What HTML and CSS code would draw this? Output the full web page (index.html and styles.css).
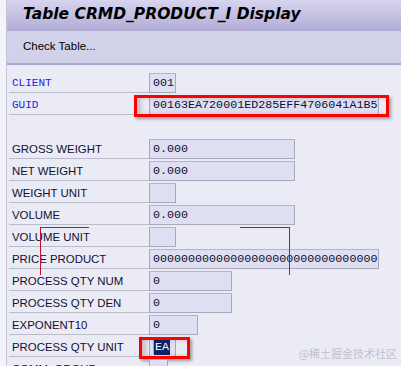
FILE: index.html
```html
<!DOCTYPE html>
<html lang="en">
<head>
    <meta charset="UTF-8">
    <meta name="viewport" content="width=device-width, initial-scale=1.0">
    <link rel="stylesheet" href="styles.css">
</head>
<body>

    <div class="window">
        <header class="title">Table CRMD_PRODUCT_I Display</header>
        <div class="toolbar">Check Table...</div>

        <section class="form">
            <div class="row key">
                <div class="label">CLIENT</div>
                <div class="field w-unit">001</div>
            </div>
            <div class="row key">
                <div class="label">GUID</div>
                <div class="field w-guid">00163EA720001ED285EFF4706041A1B5</div>
                <span class="mark mark-guid"></span>
            </div>
            <div class="row blank"></div>
            <div class="row">
                <div class="label">GROSS WEIGHT</div>
                <div class="field w-num">0.000</div>
            </div>
            <div class="row">
                <div class="label">NET WEIGHT</div>
                <div class="field w-num">0.000</div>
            </div>
            <div class="row">
                <div class="label">WEIGHT UNIT</div>
                <div class="field w-unit"></div>
            </div>
            <div class="row">
                <div class="label">VOLUME</div>
                <div class="field w-num">0.000</div>
            </div>
            <div class="row">
                <div class="label">VOLUME UNIT</div>
                <div class="field w-unit"></div>
            </div>
            <div class="row">
                <div class="label">PRICE PRODUCT</div>
                <div class="field w-guid">00000000000000000000000000000000</div>
            </div>
            <div class="row">
                <div class="label">PROCESS QTY NUM</div>
                <div class="field w-qty">0</div>
            </div>
            <div class="row">
                <div class="label">PROCESS QTY DEN</div>
                <div class="field w-qty">0</div>
            </div>
            <div class="row">
                <div class="label">EXPONENT10</div>
                <div class="field w-exp">0</div>
            </div>
            <div class="row">
                <div class="label">PROCESS QTY UNIT</div>
                <div class="field w-unit"><span class="caret"></span><span class="selected">EA</span></div>
                <span class="mark mark-unit"></span>
            </div>
            <div class="row">
                <div class="label">COMM. GROUP</div>
                <div class="field w-small"></div>
            </div>
        </section>
    </div>

    <!-- connector lines drawn over the form -->
    <div class="wire wire-left"></div>
    <div class="wire wire-right"></div>

    <div class="watermark">@稀土掘金技术社区</div>

</body>
</html>
```

FILE: styles.css
```css
body {
    margin: 0;
    padding: 0;
    height: 366px;
    overflow: hidden;
    background-color: #f3f3fa;
    font-family: 'Liberation Sans', Arial, sans-serif;
    color: #000;
}

.window {
    margin-left: 6px;
    height: 366px;
    border-left: 1px solid #c4c4d6;
    background-color: #ebebf6;
}

.title {
    height: 31px;
    box-sizing: border-box;
    padding-left: 16px;
    line-height: 29px;
    font-family: 'DejaVu Sans', Verdana, sans-serif;
    font-size: 15.5px;
    font-weight: bold;
    font-style: italic;
    background: linear-gradient(#d6d4ee, #b2aed8);
    border-bottom: 1px solid #aeaad4;
}

.toolbar {
    height: 34px;
    box-sizing: border-box;
    padding-left: 16px;
    line-height: 31px;
    font-size: 11.5px;
    background-color: #d2d1ea;
    border-bottom: 2px solid #a9a7d0;
}

.form {
    padding: 8px 0 0 2px;
}

.row {
    position: relative;
    display: flex;
    height: 22px;
}

.label {
    width: 140px;
    height: 20px;
    box-sizing: border-box;
    padding-left: 3px;
    line-height: 20px;
    font-size: 11.4px;
    color: #101030;
    border-bottom: 1px solid #bcbccc;
}

.key .label {
    font-family: 'Liberation Mono', 'Courier New', monospace;
    font-size: 11px;
    color: #2222e6;
}

.field {
    height: 20px;
    box-sizing: border-box;
    padding-left: 3px;
    line-height: 18px;
    font-family: 'Liberation Mono', 'Courier New', monospace;
    font-size: 11.7px;
    color: #10102a;
    background-color: #dfdff4;
    border: 1px solid #a8a8b6;
    border-top-color: #b4b4c2;
    white-space: nowrap;
    overflow: hidden;
}

.w-unit { width: 27px; }
.w-small { width: 19px; }
.w-guid { width: 230px; }
.w-num { width: 146px; }
.w-qty { width: 83px; }
.w-exp { width: 49px; }

.caret {
    display: inline-block;
    width: 1px;
    height: 14px;
    vertical-align: middle;
    background-color: #d8a040;
}

.selected {
    display: inline-block;
    height: 16px;
    padding: 0 1px;
    line-height: 16px;
    vertical-align: middle;
    color: #fff;
    background-color: #0c2468;
}

.mark {
    position: absolute;
    top: 0;
    height: 22px;
    box-sizing: border-box;
    border: 3px solid #ff0000;
    box-shadow: 2px 2px 3px rgba(0, 0, 0, 0.35), inset 4px 0 4px rgba(0, 0, 0, 0.18);
}

.mark-guid {
    left: 125px;
    width: 255px;
}

.mark-unit {
    left: 130px;
    width: 51px;
}

.wire {
    position: absolute;
    top: 227px;
    height: 47px;
    border-top: 1px solid #c0102c;
}

.wire-left {
    left: 40px;
    width: 48px;
    border-left: 1px solid #c0102c;
}

.wire-right {
    left: 240px;
    width: 49px;
    border-right: 1px solid #c0102c;
}

.watermark {
    position: absolute;
    right: 4px;
    top: 345px;
    font-family: 'Noto Sans CJK SC', sans-serif;
    font-size: 11px;
    color: #c2c2cc;
}
```
